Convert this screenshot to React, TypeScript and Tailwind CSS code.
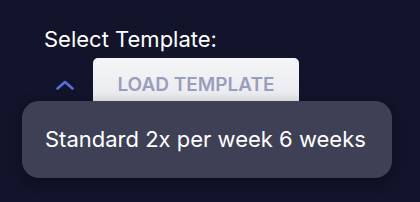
export default function App() {
  return (
    <div className="relative h-[202px] w-[420px] overflow-hidden bg-[#11142a] font-['Inter',sans-serif]">
      <div className="pl-[44px] pt-[26px]">
        <p className="text-[22px] leading-[27px] text-white">Select Template:</p>
        <div className="mt-[5px] flex items-start gap-[19px] pl-[12px]">
          <svg width="18" height="10" viewBox="0 0 18 10" className="mt-[22px]" fill="none">
            <path d="M1.5 8.5 L9 2 L16.5 8.5" stroke="#5a6de0" strokeWidth="2.6" strokeLinecap="round" strokeLinejoin="round" />
          </svg>
          <button className="flex h-[60px] w-[206px] flex-col items-center justify-start rounded-[5px] bg-gradient-to-b from-[#f4f5f7] to-[#e6e7ea] pt-[15px]">
            <span className="block text-[19px] font-semibold leading-[23px] text-[#9a9ebd]">LOAD TEMPLATE</span>
          </button>
        </div>
      </div>
      <div className="absolute left-[22px] top-[101px] flex h-[77px] w-[370px] items-center rounded-[17px] bg-[#3e4155] pl-[23px] shadow-[0_4px_14px_rgba(0,0,0,0.35)]">
        <span className="text-[22px] text-white">Standard 2x per week 6 weeks</span>
      </div>
    </div>
  );
}
